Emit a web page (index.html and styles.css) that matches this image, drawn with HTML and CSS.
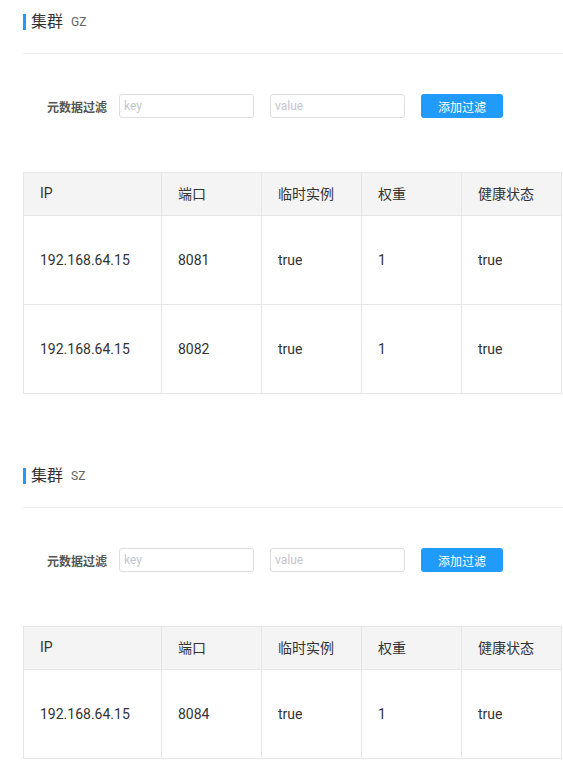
FILE: index.html
```html
<!DOCTYPE html>
<html lang="zh-CN">
<head>
<meta charset="utf-8">
<title>集群</title>
<link rel="stylesheet" href="styles.css">
</head>
<body>
<div class="page">
  <section class="cluster">
    <div class="title"><span class="title-main">集群</span><span class="title-sub">GZ</span></div>
    <div class="divider"></div>
    <div class="filter">
      <span class="filter-label">元数据过滤</span>
      <input class="filter-input" type="text" placeholder="key">
      <input class="filter-input" type="text" placeholder="value">
      <button class="btn-primary" type="button">添加过滤</button>
    </div>
    <table class="grid">
      <colgroup><col class="c-ip"><col class="c-n"><col class="c-n"><col class="c-n"><col class="c-n"></colgroup>
      <thead>
        <tr><th>IP</th><th>端口</th><th>临时实例</th><th>权重</th><th>健康状态</th></tr>
      </thead>
      <tbody>
        <tr><td>192.168.64.15</td><td>8081</td><td>true</td><td>1</td><td>true</td></tr>
        <tr><td>192.168.64.15</td><td>8082</td><td>true</td><td>1</td><td>true</td></tr>
      </tbody>
    </table>
  </section>
  <section class="cluster">
    <div class="title"><span class="title-main">集群</span><span class="title-sub">SZ</span></div>
    <div class="divider"></div>
    <div class="filter">
      <span class="filter-label">元数据过滤</span>
      <input class="filter-input" type="text" placeholder="key">
      <input class="filter-input" type="text" placeholder="value">
      <button class="btn-primary" type="button">添加过滤</button>
    </div>
    <table class="grid">
      <colgroup><col class="c-ip"><col class="c-n"><col class="c-n"><col class="c-n"><col class="c-n"></colgroup>
      <thead>
        <tr><th>IP</th><th>端口</th><th>临时实例</th><th>权重</th><th>健康状态</th></tr>
      </thead>
      <tbody>
        <tr><td>192.168.64.15</td><td>8084</td><td>true</td><td>1</td><td>true</td></tr>
      </tbody>
    </table>
  </section>
</div>
</body>
</html>
```

FILE: styles.css
```css
* { box-sizing: border-box; }
html, body { margin: 0; padding: 0; background: #fff; }
body {
  font-family: Roboto, "Noto Sans CJK SC", "Liberation Sans", sans-serif;
  color: #333;
  overflow: hidden;
}
.page { padding-left: 23px; }
.cluster { padding-top: 14px; margin-bottom: 60px; }
.title {
  display: flex;
  align-items: center;
  height: 16px;
  border-left: 3px solid #209bfa;
  padding-left: 5px;
}
.title-main { font-size: 16px; line-height: 16px; color: #333; }
.title-sub { font-size: 12px; line-height: 16px; color: #666; margin-left: 8px; }
.divider { height: 1px; background: #ececec; margin-top: 23px; }
.filter {
  display: flex;
  align-items: center;
  margin-top: 40px;
  height: 24px;
  padding-left: 24px;
}
.filter-label { font-size: 12px; color: #555; font-weight: 600; margin-right: 12px; }
.filter-input {
  width: 135px;
  height: 24px;
  border: 1px solid #dcdee3;
  border-radius: 3px;
  padding: 0 4px;
  font-family: inherit;
  font-size: 12px;
  color: #333;
  margin-right: 16px;
  outline: none;
}
.filter-input::placeholder { color: #c4c6cf; }
.btn-primary {
  width: 82px;
  height: 24px;
  border: none;
  border-radius: 3px;
  background: #209bfa;
  color: #fff;
  font-family: inherit;
  font-size: 12px;
  padding: 0;
}
.grid {
  margin-top: 54px;
  width: 539px;
  table-layout: fixed;
  border-collapse: separate;
  border-spacing: 0;
  border-top: 1px solid #e6e6e6;
  border-left: 1px solid #e6e6e6;
  font-size: 14px;
}
.c-ip { width: 138px; }
.c-n { width: 100px; }
.grid th, .grid td {
  border-right: 1px solid #e6e6e6;
  border-bottom: 1px solid #e6e6e6;
  padding: 0 0 0 16px;
  text-align: left;
  vertical-align: middle;
  font-weight: normal;
  color: #333;
  white-space: nowrap;
}
.grid th { height: 43px; background: #f4f4f4; padding-bottom: 3px; }
.grid td { height: 89px; padding-bottom: 1px; }
```
